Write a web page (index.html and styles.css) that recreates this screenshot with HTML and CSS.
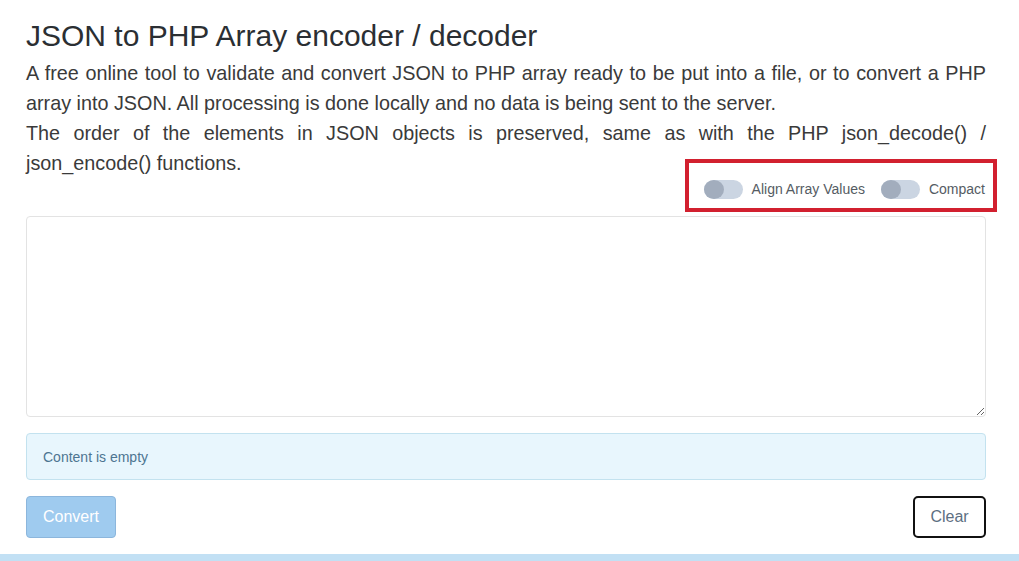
FILE: index.html
```html
<!DOCTYPE html>
<html lang="en">
<head>
<meta charset="utf-8">
<title>JSON to PHP Array encoder / decoder</title>
<link rel="stylesheet" href="styles.css">
</head>
<body>
<main class="page">
  <h1 class="title">JSON to PHP Array encoder / decoder</h1>
  <p class="intro">A free online tool to validate and convert JSON to PHP array ready to be put into a file, or to convert a PHP array into JSON. All processing is done locally and no data is being sent to the server.<br>The order of the elements in JSON objects is preserved, same as with the PHP json_decode() / json_encode() functions.</p>
  <div class="options">
    <label class="switch"><span class="track"><span class="knob"></span></span><span class="switch-label">Align Array Values</span></label>
    <label class="switch"><span class="track"><span class="knob"></span></span><span class="switch-label">Compact</span></label>
    <div class="highlight"></div>
  </div>
  <textarea class="editor"></textarea>
  <div class="alert">Content is empty</div>
  <div class="actions">
    <button class="btn btn-convert" type="button">Convert</button>
    <button class="btn btn-clear" type="button">Clear</button>
  </div>
</main>
<div class="footer-bar"></div>
</body>
</html>
```
FILE: styles.css
```css
html, body {
  margin: 0;
  padding: 0;
  background: #ffffff;
  font-family: "Liberation Sans", Arial, sans-serif;
  color: #333333;
  overflow: hidden;
}

.page {
  width: 960px;
  margin: 0 0 0 26px;
  padding-top: 18px;
  display: flex;
  flex-direction: column;
}

.title {
  margin: 0 0 4px 0;
  font-size: 30px;
  font-weight: 400;
  line-height: 36px;
  color: #2b2f33;
}

.intro {
  margin: 0;
  font-size: 19.8px;
  line-height: 30px;
  text-align: justify;
  color: #3a3a3a;
}

.options {
  position: relative;
  display: flex;
  justify-content: flex-end;
  align-items: center;
  gap: 16px;
  height: 20px;
  margin-top: 1px;
  padding-right: 1px;
}

.switch {
  display: flex;
  align-items: center;
  gap: 9px;
  font-size: 14px;
  color: #555c63;
}

.track {
  position: relative;
  display: block;
  width: 39px;
  height: 19px;
  border-radius: 10px;
  background: #cbd5e2;
}

.knob {
  position: absolute;
  left: 0;
  top: 0;
  width: 20px;
  height: 19px;
  border-radius: 50%;
  background: #a2adbd;
}

.highlight {
  position: absolute;
  left: 659px;
  right: -11px;
  top: -20px;
  bottom: -13px;
  border: 4px solid #d2202f;
}

.editor {
  display: block;
  margin-top: 17px;
  width: 960px;
  height: 201px;
  box-sizing: border-box;
  border: 1px solid #e3e3e3;
  border-radius: 4px;
  background: #ffffff;
  resize: vertical;
  outline: none;
}

.alert {
  margin-top: 16px;
  height: 47px;
  box-sizing: border-box;
  padding: 0 16px;
  display: flex;
  align-items: center;
  background: #e8f6fd;
  border: 1px solid #c3e2ef;
  border-radius: 4px;
  font-size: 14px;
  color: #4d7591;
}

.actions {
  margin-top: 16px;
  display: flex;
  justify-content: space-between;
}

.btn {
  height: 42px;
  box-sizing: border-box;
  font-family: "Liberation Sans", Arial, sans-serif;
  font-size: 16px;
  border-radius: 4px;
  cursor: pointer;
}

.btn-convert {
  width: 90px;
  background: #9fcbef;
  border: 1px solid #8cb6dc;
  color: #ffffff;
}

.btn-clear {
  width: 73px;
  background: #ffffff;
  border: 2px solid #111111;
  border-radius: 5px;
  color: #5d6f82;
}

.footer-bar {
  margin-top: 16px;
  height: 10px;
  background: #c2e0f4;
}
```
